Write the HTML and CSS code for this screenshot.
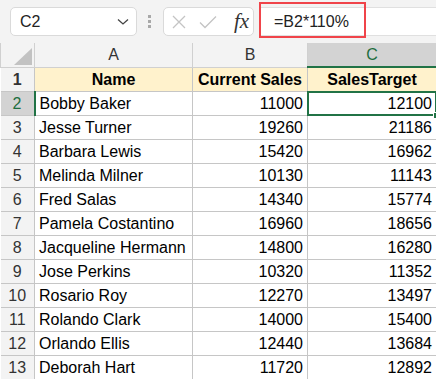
FILE: index.html
```html
<!DOCTYPE html>
<html lang="en">
<head>
    <meta charset="UTF-8">
    <title>Sales Target</title>
    <link rel="stylesheet" href="styles.css">
</head>
<body>
    <div class="toolbar">
        <div class="namebox">
            <span>C2</span>
            <svg class="chevron" width="12" height="8" viewBox="0 0 12 8"><path d="M1 1.5 L6 6 L11 1.5" fill="none" stroke="#444" stroke-width="1.3"/></svg>
        </div>
        <div class="dots"><i></i><i></i><i></i></div>
        <div class="fxbox">
            <svg width="16" height="16" viewBox="0 0 16 16"><path d="M2 2 L14 14 M14 2 L2 14" stroke="#c4c4c4" stroke-width="1.3"/></svg>
            <svg width="18" height="16" viewBox="0 0 18 16"><path d="M1 8.5 L6 13.5 L17 2.5" fill="none" stroke="#c4c4c4" stroke-width="1.3"/></svg>
            <span class="fx">fx</span>
        </div>
        <div class="formula">=B2*110%</div>
        <div class="highlight"></div>
    </div>

    <table class="sheet">
        <colgroup>
            <col class="c-num">
            <col class="c-a">
            <col class="c-b">
            <col class="c-c">
        </colgroup>
        <thead>
            <tr>
                <th class="corner"><svg width="18" height="17" viewBox="0 0 18 17"><path d="M18 0 L18 17 L0 17 Z" fill="#c2c2c2"/></svg></th>
                <th>A</th>
                <th>B</th>
                <th class="active-col">C</th>
            </tr>
        </thead>
        <tbody>
            <tr class="title-row">
                <td class="rownum">1</td>
                <td>Name</td>
                <td>Current Sales</td>
                <td>SalesTarget</td>
            </tr>
            <tr>
                <td class="rownum active-row">2</td>
                <td>Bobby Baker</td>
                <td class="num">11000</td>
                <td class="num selected">12100</td>
            </tr>
            <tr><td class="rownum">3</td><td>Jesse Turner</td><td class="num">19260</td><td class="num">21186</td></tr>
            <tr><td class="rownum">4</td><td>Barbara Lewis</td><td class="num">15420</td><td class="num">16962</td></tr>
            <tr><td class="rownum">5</td><td>Melinda Milner</td><td class="num">10130</td><td class="num">11143</td></tr>
            <tr><td class="rownum">6</td><td>Fred Salas</td><td class="num">14340</td><td class="num">15774</td></tr>
            <tr><td class="rownum">7</td><td>Pamela Costantino</td><td class="num">16960</td><td class="num">18656</td></tr>
            <tr><td class="rownum">8</td><td>Jacqueline Hermann</td><td class="num">14800</td><td class="num">16280</td></tr>
            <tr><td class="rownum">9</td><td>Jose Perkins</td><td class="num">10320</td><td class="num">11352</td></tr>
            <tr><td class="rownum">10</td><td>Rosario Roy</td><td class="num">12270</td><td class="num">13497</td></tr>
            <tr><td class="rownum">11</td><td>Rolando Clark</td><td class="num">14000</td><td class="num">15400</td></tr>
            <tr><td class="rownum">12</td><td>Orlando Ellis</td><td class="num">12440</td><td class="num">13684</td></tr>
            <tr><td class="rownum">13</td><td>Deborah Hart</td><td class="num">11720</td><td class="num">12892</td></tr>
        </tbody>
    </table>
</body>
</html>
```

FILE: styles.css
```css
body {
    margin: 0;
    font-family: "Liberation Sans", Arial, sans-serif;
    background-color: #fff;
    color: #000;
    overflow: hidden;
}

.toolbar {
    position: relative;
    display: flex;
    align-items: center;
    height: 43px;
    padding-left: 10px;
    background-color: #f3f3f3;
    box-sizing: border-box;
}

.namebox {
    display: flex;
    align-items: center;
    justify-content: space-between;
    width: 127px;
    height: 29px;
    padding: 0 7px 0 9px;
    background-color: #fff;
    border: 1px solid #dadada;
    border-radius: 5px;
    box-sizing: border-box;
    font-size: 16px;
    color: #222;
}

.dots {
    display: flex;
    flex-direction: column;
    gap: 2px;
    width: 26px;
    padding-left: 11px;
    box-sizing: border-box;
}

.dots i {
    display: block;
    width: 3px;
    height: 3px;
    background-color: #a8a8a8;
}

.fxbox {
    display: flex;
    align-items: center;
    gap: 12px;
    width: 91px;
    height: 29px;
    padding-left: 7px;
    background-color: #fff;
    border: 1px solid #dadada;
    border-radius: 5px;
    box-sizing: border-box;
}

.fx {
    margin-left: 5px;
    font-family: "Liberation Serif", serif;
    font-style: italic;
    font-size: 21px;
    color: #333;
    line-height: 1;
}

.formula {
    flex: 1;
    height: 29px;
    margin-left: 7px;
    padding-left: 13px;
    background-color: #fff;
    border-top: 1px solid #e0e0e0;
    border-bottom: 1px solid #e0e0e0;
    box-sizing: border-box;
    font-size: 16px;
    line-height: 27px;
    color: #222;
}

.highlight {
    position: absolute;
    left: 259px;
    top: 2px;
    width: 107px;
    height: 36px;
    border: 2px solid #f0444a;
    box-sizing: border-box;
}

.sheet {
    width: 436px;
    table-layout: fixed;
    border-collapse: collapse;
    font-size: 16px;
}

.c-num { width: 34px; }
.c-a { width: 158px; }
.c-b { width: 115px; }
.c-c { width: 129px; }

.sheet th,
.sheet td {
    height: 22px;
    padding: 1px 4px 0 4px;
    border: 1px solid #c6c6c6;
    white-space: nowrap;
    overflow: hidden;
    line-height: 20px;
}

.sheet th {
    background-color: #f3f3f3;
    font-weight: normal;
    color: #333;
    border-top: none;
    border-color: #d0d0d0;
}

.sheet th.corner {
    padding: 0;
    text-align: right;
    vertical-align: bottom;
}

.corner svg {
    display: block;
    margin: 0 2px 2px auto;
}

.sheet th.active-col {
    background-color: #d3d3d3;
    color: #1e6e3f;
    border-bottom: 2px solid #217346;
}

.sheet td.rownum {
    background-color: #f3f3f3;
    text-align: center;
    color: #333;
    padding: 1px 0 0 0;
    border-left: none;
}

.sheet td.active-row {
    background-color: #d3d3d3;
    color: #1e6e3f;
    border-right: 2px solid #217346;
}

.title-row td {
    background-color: #fff2cc;
    font-weight: bold;
    text-align: center;
}

.sheet td.num {
    text-align: right;
}

.sheet td.selected {
    position: relative;
    overflow: visible;
}

.sheet td.selected::before {
    content: "";
    position: absolute;
    left: -1px;
    top: -1px;
    right: -1px;
    bottom: -1px;
    border: 2px solid #217346;
}

.sheet td.selected::after {
    content: "";
    position: absolute;
    right: -4px;
    bottom: -4px;
    width: 5px;
    height: 5px;
    background-color: #217346;
    border: 1px solid #fff;
}
```
